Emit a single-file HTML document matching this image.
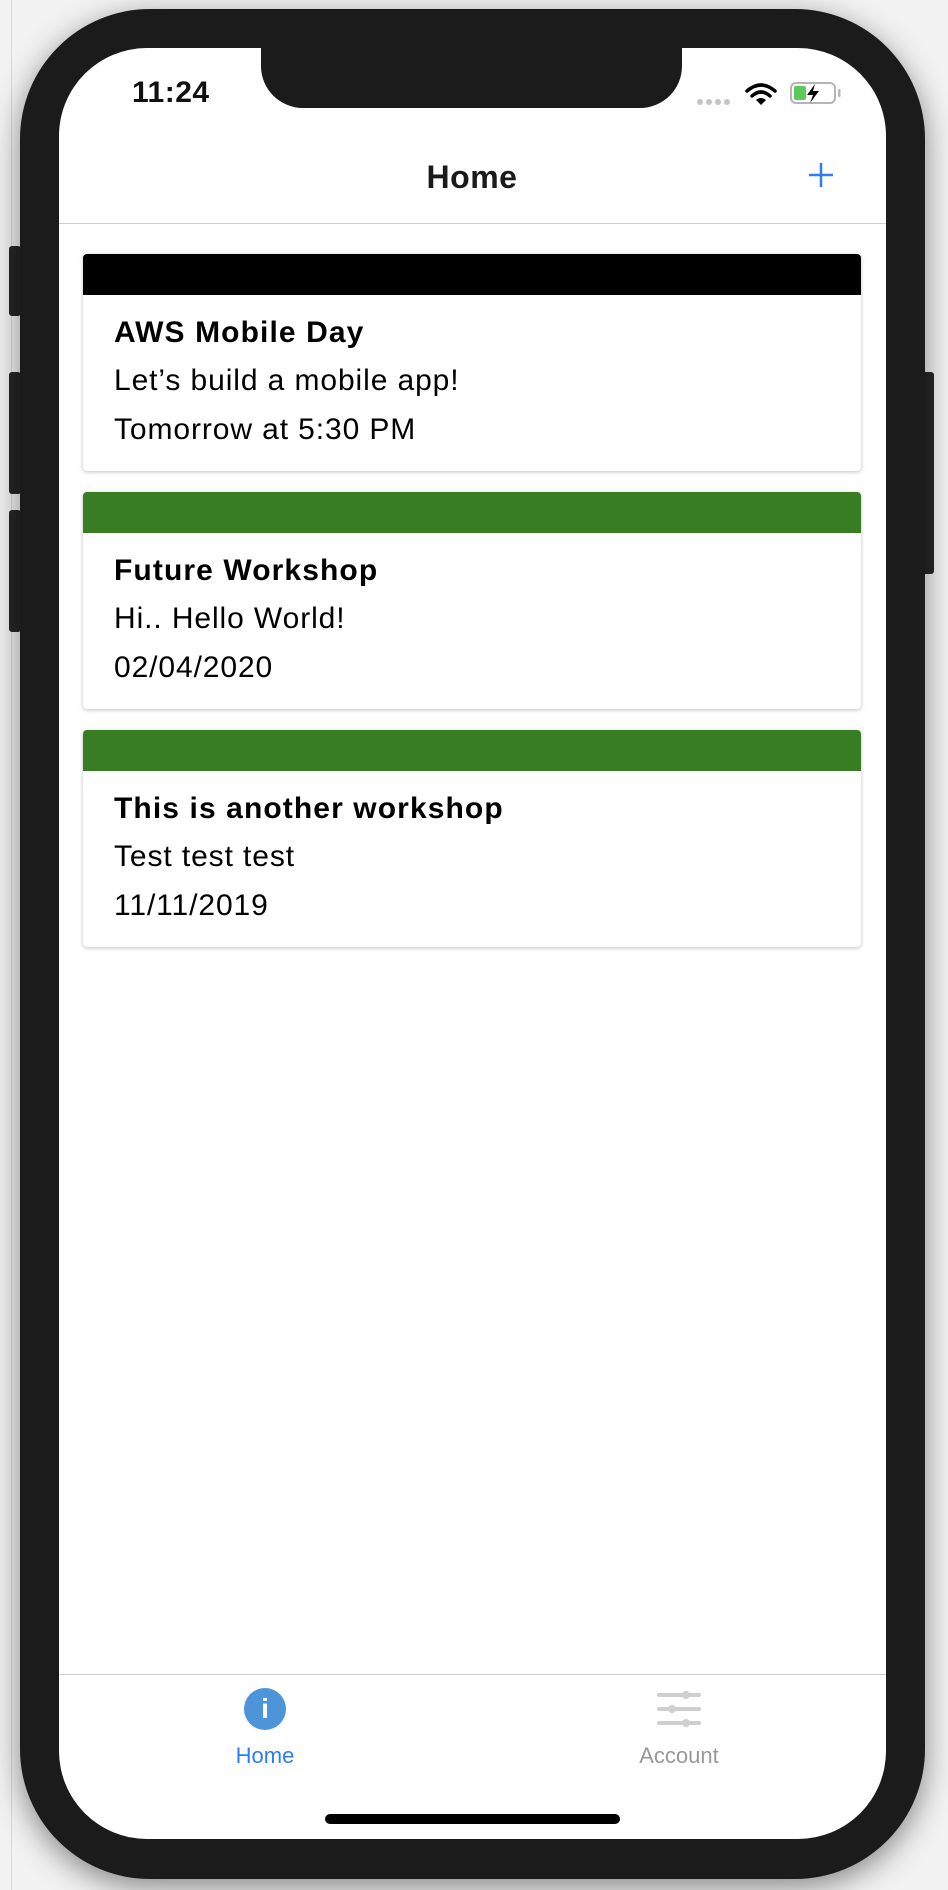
<!DOCTYPE html>
<html><head><meta charset="utf-8">
<style>
*{margin:0;padding:0;box-sizing:border-box}
html,body{width:948px;height:1890px;overflow:hidden;background:#f2f2f2;font-family:"Liberation Sans",Arial,sans-serif}
.abs{position:absolute}
.phone{left:20px;top:9px;width:905px;height:1870px;background:#1b1b1b;border-radius:130px;box-shadow:0 8px 30px rgba(0,0,0,.45)}
.screen{left:59px;top:48px;width:827px;height:1791px;background:#fff;border-radius:88px;overflow:hidden}
.notch{left:261px;top:40px;width:421px;height:68px;background:#1b1b1b;border-radius:0 0 42px 42px}
.btn{background:#262626;border-radius:3px}
.card{left:83px;width:778px;height:217px;background:#fff;border-radius:4px;box-shadow:0 1px 4px rgba(0,0,0,.25);overflow:hidden}
.bar{position:absolute;left:0;top:0;width:100%;height:41px}
.t{position:absolute;left:31px;white-space:nowrap;color:#000}
.b{font-size:30px;font-weight:bold;letter-spacing:1.1px}
.r{font-size:30px;letter-spacing:0.9px}
</style></head><body>
<div class="abs" style="left:11px;top:0;width:1px;height:1890px;background:#d8d8d8"></div>
<div class="abs btn" style="left:9px;top:246px;width:12px;height:70px"></div>
<div class="abs btn" style="left:9px;top:372px;width:12px;height:122px"></div>
<div class="abs btn" style="left:9px;top:510px;width:12px;height:122px"></div>
<div class="abs btn" style="left:922px;top:372px;width:12px;height:202px"></div>
<div class="abs phone"></div>
<div class="abs screen"></div>
<div class="abs notch"></div>
<div class="abs" style="left:132px;top:76px;font-size:30px;font-weight:bold;color:#111;letter-spacing:0.5px">11:24</div>
<svg class="abs" style="left:690px;top:76px" width="160" height="34" viewBox="0 0 160 34">
<g fill="#c4c4c4"><circle cx="10" cy="26" r="3"/><circle cx="19" cy="26" r="3"/><circle cx="28" cy="26" r="3"/><circle cx="37" cy="26" r="3"/></g>
<g fill="none" stroke="#000" stroke-width="3.5" stroke-linecap="round"><path d="M57 15 Q71 3 85 15"/><path d="M62 20 Q71 12 80 20"/></g>
<path d="M66 24 Q71 20 76 24 L71 29 Z" fill="#000"/>
<rect x="101" y="7" width="44" height="20" rx="5" fill="none" stroke="#b5b5b5" stroke-width="2"/>
<rect x="148" y="13" width="2.5" height="8" rx="1" fill="#b5b5b5"/>
<rect x="104" y="10" width="12" height="14" rx="2" fill="#5bc95b"/>
<path d="M125 8 L117 19 L123 19 L120 27 L129 15 L123 15 Z" fill="#000"/>
</svg>
<div class="abs" style="left:372px;top:159px;width:200px;text-align:center;font-size:32px;font-weight:bold;color:#1a1a1a;letter-spacing:0.5px">Home</div>
<svg class="abs" style="left:808px;top:162px" width="26" height="26"><path d="M13 1V25M1 13H25" stroke="#2f7cf6" stroke-width="2.5"/></svg>
<div class="abs" style="left:59px;top:223px;width:827px;height:1px;background:#cfcfcf"></div>

<div class="abs card" style="top:254px"><div class="bar" style="background:#000"></div>
<div class="t b" style="top:62px">AWS Mobile Day</div>
<div class="t r" style="top:110px">Let’s build a mobile app!</div>
<div class="t r" style="top:159px">Tomorrow at 5:30 PM</div></div>

<div class="abs card" style="top:492px"><div class="bar" style="background:#387d23"></div>
<div class="t b" style="top:62px">Future Workshop</div>
<div class="t r" style="top:110px">Hi.. Hello World!</div>
<div class="t r" style="top:159px">02/04/2020</div></div>

<div class="abs card" style="top:730px"><div class="bar" style="background:#387d23"></div>
<div class="t b" style="top:62px">This is another workshop</div>
<div class="t r" style="top:110px">Test test test</div>
<div class="t r" style="top:159px">11/11/2019</div></div>

<div class="abs" style="left:59px;top:1674px;width:827px;height:1px;background:#cfcfcf"></div>
<div class="abs" style="left:244px;top:1688px;width:42px;height:42px;border-radius:50%;background:#4e94d8;color:#fff;text-align:center;font-size:28px;line-height:42px;font-weight:bold">i</div>
<div class="abs" style="left:205px;top:1743px;width:120px;text-align:center;font-size:22px;color:#2f7cf6">Home</div>
<svg class="abs" style="left:656px;top:1690px" width="46" height="40"><g stroke="#cfcfcf" stroke-width="4" stroke-linecap="round"><path d="M3 5H43M3 19H43M3 33H43"/></g><g fill="#cfcfcf"><circle cx="30" cy="5" r="4"/><circle cx="16" cy="19" r="4"/><circle cx="30" cy="33" r="4"/></g></svg>
<div class="abs" style="left:599px;top:1743px;width:160px;text-align:center;font-size:22px;color:#999">Account</div>
<div class="abs" style="left:325px;top:1814px;width:295px;height:10px;border-radius:5px;background:#000"></div>
</body></html>
